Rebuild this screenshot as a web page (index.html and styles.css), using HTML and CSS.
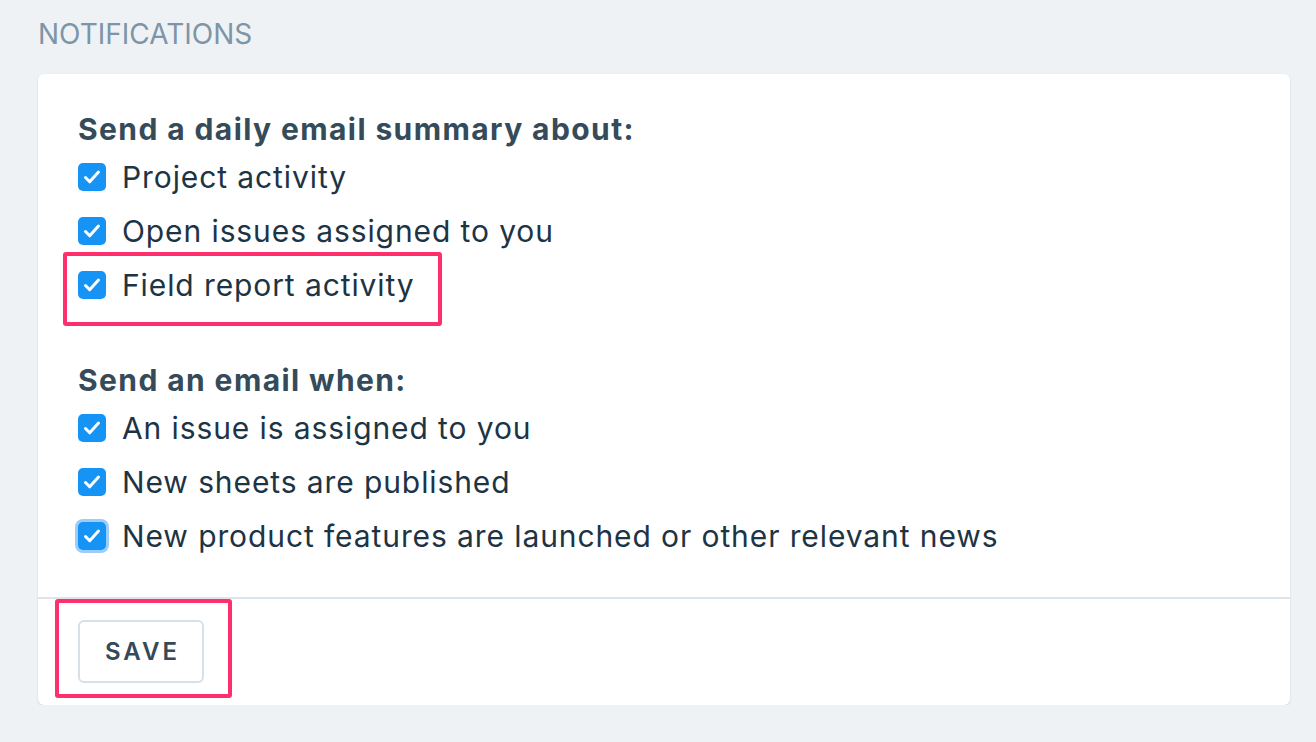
FILE: index.html
```html
<!DOCTYPE html>
<html lang="en">
<head>
  <meta charset="UTF-8" />
  <title>Notifications</title>
  <link rel="stylesheet" href="styles.css">
</head>
<body>
  <h2 class="section-title">NOTIFICATIONS</h2>

  <div class="card">
    <div class="card-body">
      <h3 class="group-title">Send a daily email summary about:</h3>
      <label class="option"><span class="box"><svg viewBox="0 0 28 28"><path d="M7.5 14.5l4.2 4.3L20.5 9"/></svg></span>Project activity</label>
      <label class="option"><span class="box"><svg viewBox="0 0 28 28"><path d="M7.5 14.5l4.2 4.3L20.5 9"/></svg></span>Open issues assigned to you</label>
      <label class="option"><span class="box"><svg viewBox="0 0 28 28"><path d="M7.5 14.5l4.2 4.3L20.5 9"/></svg></span>Field report activity</label>
      <div class="mark mark-field"></div>

      <h3 class="group-title second">Send an email when:</h3>
      <label class="option"><span class="box"><svg viewBox="0 0 28 28"><path d="M7.5 14.5l4.2 4.3L20.5 9"/></svg></span>An issue is assigned to you</label>
      <label class="option"><span class="box"><svg viewBox="0 0 28 28"><path d="M7.5 14.5l4.2 4.3L20.5 9"/></svg></span>New sheets are published</label>
      <label class="option"><span class="box focus"><svg viewBox="0 0 28 28"><path d="M7.5 14.5l4.2 4.3L20.5 9"/></svg></span>New product features are launched or other relevant news</label>
    </div>
    <div class="card-footer">
      <button class="save">SAVE</button>
      <div class="mark mark-save"></div>
    </div>
  </div>
</body>
</html>
```

FILE: styles.css
```css
body { margin: 0; padding: 19px 26px 0 38px; background: #eef2f5; font-family: Inter, "Open Sans", sans-serif; color: #1d3445; }
.section-title { margin: 0 0 25px; font-size: 28px; font-weight: 400; line-height: 30px; color: #7d95a7; }
.card { background: #fff; border-radius: 6px; box-shadow: 0 1px 2px rgba(40, 70, 90, 0.18); }
.card-body { position: relative; padding: 35px 40px 34px; border-bottom: 2px solid #dde5ec; }
.group-title { margin: 0 0 1px; font-size: 30px; font-weight: 700; line-height: 40px; letter-spacing: 1.4px; color: #354b59; }
.group-title.second { margin-top: 48px; }
.option { display: flex; align-items: center; gap: 16px; height: 54px; font-size: 30px; letter-spacing: 0.9px; }
.box { width: 28px; height: 28px; border-radius: 5px; background: #1694f5; display: flex; flex-shrink: 0; }
.box svg { width: 28px; height: 28px; fill: none; stroke: #fff; stroke-width: 3; stroke-linecap: round; stroke-linejoin: round; }
.box.focus { box-shadow: 0 0 0 3px #9ccdfa; }
.card-footer { position: relative; padding: 21px 40px 22px; }
.save { font-family: inherit; font-size: 24px; font-weight: 600; letter-spacing: 3px; color: #34495a; background: #fff; border: 2px solid #d5e1ea; border-radius: 6px; width: 126px; height: 63px; padding: 0 0 0 3px; }
.mark { position: absolute; border: 4px solid #ff2f6d; border-radius: 3px; }
.mark-field { left: 25px; top: 178px; width: 371px; height: 66px; }
.mark-save { left: 17px; top: 0; width: 169px; height: 91px; }
```
